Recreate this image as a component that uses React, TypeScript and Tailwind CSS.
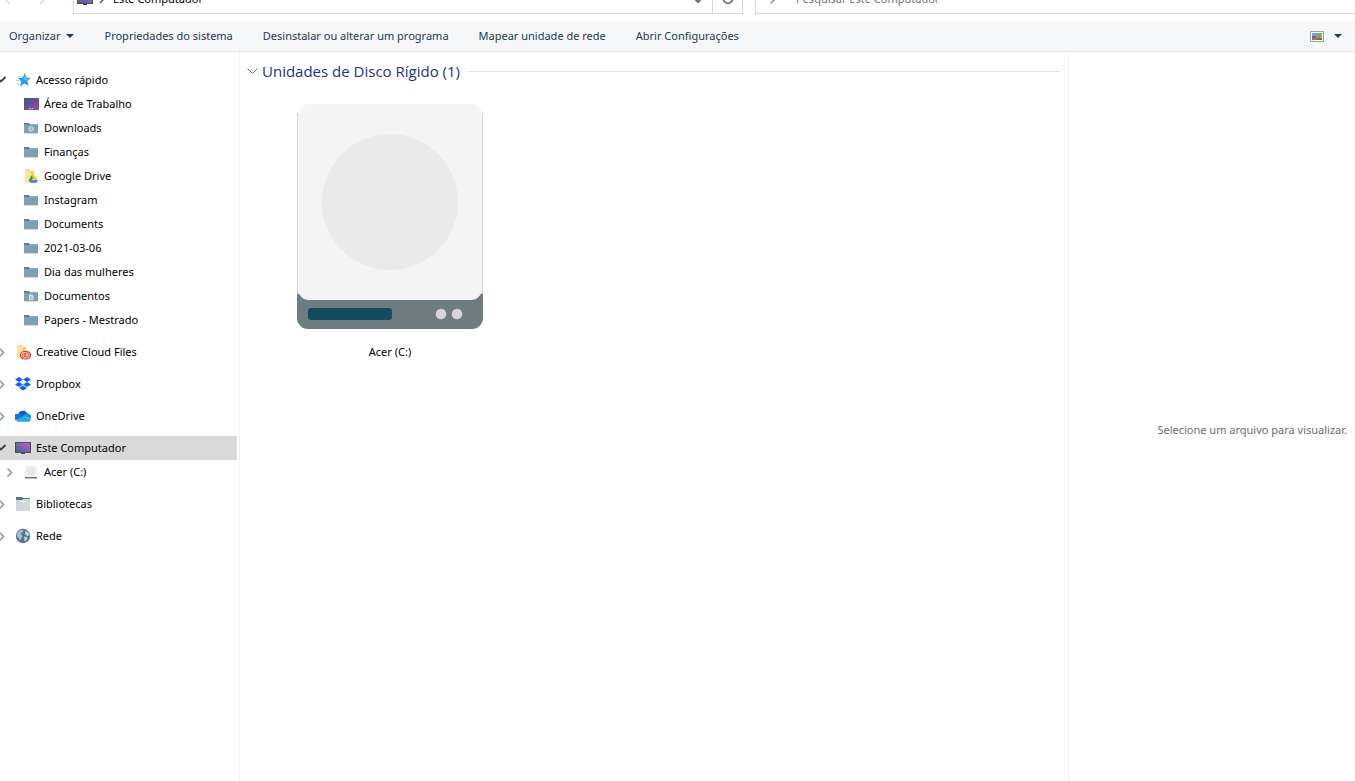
import type { ReactNode } from "react"

type IconName =
  | "star" | "desktop" | "downloads" | "folder" | "drive" | "documents"
  | "creative" | "dropbox" | "onedrive" | "computer" | "disk" | "library" | "network"

interface TreeItem {
  label: string
  icon: IconName
  expanded?: boolean
  selected?: boolean
  children?: TreeItem[]
}

const tree: TreeItem[] = [
  {
    label: "Acesso rápido",
    icon: "star",
    expanded: true,
    children: [
      { label: "Área de Trabalho", icon: "desktop" },
      { label: "Downloads", icon: "downloads" },
      { label: "Finanças", icon: "folder" },
      { label: "Google Drive", icon: "drive" },
      { label: "Instagram", icon: "folder" },
      { label: "Documents", icon: "folder" },
      { label: "2021-03-06", icon: "folder" },
      { label: "Dia das mulheres", icon: "folder" },
      { label: "Documentos", icon: "documents" },
      { label: "Papers - Mestrado", icon: "folder" },
    ],
  },
  { label: "Creative Cloud Files", icon: "creative", expanded: false },
  { label: "Dropbox", icon: "dropbox", expanded: false },
  { label: "OneDrive", icon: "onedrive", expanded: false },
  {
    label: "Este Computador",
    icon: "computer",
    expanded: true,
    selected: true,
    children: [{ label: "Acer (C:)", icon: "disk", expanded: false }],
  },
  { label: "Bibliotecas", icon: "library", expanded: false },
  { label: "Rede", icon: "network", expanded: false },
]

const commands = [
  "Propriedades do sistema",
  "Desinstalar ou alterar um programa",
  "Mapear unidade de rede",
  "Abrir Configurações",
]

const folderShape = (
  <>
    <path d="M1 3h5l1 1.5h8V6H1z" fill="#5f8094" />
    <path d="M1 5h6l1-.5h7V13H1z" fill="#7f9fb3" />
    <path d="M1 13h14v.5H1z" fill="#a9bfcc" />
  </>
)

const yellowFolder = (
  <>
    <path d="M2 1h5l1 2h3v11H2z" fill="#f3cf6e" />
    <path d="M2 1h3l3 3v11l-6-1z" fill="#fbe3a0" />
  </>
)

const icons: Record<IconName, ReactNode> = {
  star: (
    <>
      <path d="M10 1l1.4 4.5 4.3.4-3.3 3 1.2 4.9-4.2-2.2-4.4 3 1.2-5.2L3 6.1l4.6-.6z" fill="#2a9fe8" />
      <path d="M9.8 3.5l1 3 3 .2-2.3 2-3.3-1.5z" fill="#5cc4f5" />
      <path d="M2.500 4.5h3M1 8.5h3M2 12.5h2.500" stroke="#9fd6f5" />
    </>
  ),
  desktop: (
    <>
      <path d="M1 2h15v12H1z" fill="url(#wallpaper)" />
      <path d="M6 12.5h4" stroke="#c9c0e0" strokeDasharray="1.5 1" />
    </>
  ),
  downloads: (
    <>
      {folderShape}
      <circle cx="8" cy="9" r="2.7" fill="#c6d6e0" />
      <path d="M8 7v3M6.8 9L8 10.2 9.2 9" stroke="#7f9fb3" strokeWidth=".8" fill="none" />
    </>
  ),
  folder: folderShape,
  drive: (
    <>
      {yellowFolder}
      <path d="M8.6 7.2h2.8l3.6 5.6h-2.8z" fill="#f5c518" />
      <path d="M8.6 7.2l1.5 2.6-2.9 4.7-1.5-2.3z" fill="#27a25f" />
      <path d="M8.4 12.3H15l-1.5 2.4H7.1z" fill="#3b7ded" />
    </>
  ),
  documents: (
    <>
      {folderShape}
      <path d="M6 6.5h3L10.5 8v4H6z" fill="#d7e3ea" />
      <path d="M7 9h2.5M7 10.5h2.5" stroke="#7f9fb3" strokeWidth=".6" />
    </>
  ),
  creative: (
    <>
      {yellowFolder}
      <rect x="5.5" y="7.5" width="10" height="7.5" rx="3.7" fill="#fbd9d2" stroke="#e2372c" strokeWidth="1.2" />
      <circle cx="8.8" cy="11.5" r="1.7" fill="none" stroke="#e2372c" />
      <circle cx="12" cy="11" r="2.2" fill="none" stroke="#e2372c" />
    </>
  ),
  dropbox: (
    <path
      d="M4 1L0 3.5 4 6l4-2.5zM12 1L8 3.5 12 6l4-2.5zM0 8.5L4 11l4-2.5L4 6zM12 6L8 8.5 12 11l4-2.5zM4 12l4 2.5 4-2.5-4-2.5z"
      fill="#0d62fe"
    />
  ),
  onedrive: (
    <>
      <path d="M3 6.8A5 5 0 0 1 12.2 5.2L9.5 9 3 9z" fill="#0f5fb0" />
      <path d="M3.5 6.2c2.5-.4 4.7.8 6.7 2.5L.4 12.2A3.300 3.300 0 0 1 3.5 6.2z" fill="#1479cc" />
      <path d="M12.2 5.2a3.8 3.8 0 0 1 3.4 5.6L8.5 7.7c.9-1.5 2-2.4 3.7-2.5z" fill="#1a90df" />
      <path d="M1 12L9 8l6.7 2.9a2.6 2.6 0 0 1-2.4 2.9H3.2A3 3 0 0 1 1 12z" fill="#29a9ea" />
    </>
  ),
  computer: (
    <>
      <path d="M0 2h16v11H0z" fill="#4b4a57" />
      <path d="M1 3h14v9H1z" fill="url(#screen)" />
      <path d="M6 13h4v1H6z" fill="#4b4a57" />
    </>
  ),
  disk: (
    <>
      <path d="M2 2h12v11H2z" fill="#f1f1f1" />
      <circle cx="8" cy="7" r="4" fill="#e6e6e6" />
      <path d="M2 13h12v1.5H2z" fill="#607d8b" />
    </>
  ),
  library: (
    <>
      <path d="M1 1h6l1 1h7v3H1z" fill="#5c7785" />
      <path d="M1 4h6l1-1h7v12H1z" fill="#cfd8dd" />
      <path d="M6 5.5h4" stroke="#fff" />
    </>
  ),
  network: (
    <>
      <circle cx="8" cy="8" r="7.2" fill="#4f7890" />
      <path d="M2.5 4.5L6 1.8l2.5.7L7 5 5 5.8l2.5 2L6.5 10 5 12.5 3.5 10 1.8 8z" fill="#a9c0cc" />
      <path d="M10 3l3 1 1.5 3.5-2 .5-2.3-1.5zM9 8.5l3.5.7-1 3-2 1z" fill="#c3d2da" />
    </>
  ),
}

function Icon({ name }: { name: IconName }) {
  return (
    <svg viewBox="0 0 16 16" className="h-4 w-4 shrink-0" aria-hidden="true">
      {icons[name]}
    </svg>
  )
}

function TreeRow({ item, nested }: { item: TreeItem; nested?: boolean }) {
  return (
    <div className={`mr-0.5 flex h-6 items-center ${nested ? "pl-2" : ""} ${item.selected ? "bg-[#d9d9d9]" : ""}`}>
      {item.expanded !== undefined ? (
        <button type="button" aria-label={`Expandir ${item.label}`} className="h-4 w-[15px] shrink-0">
          <svg viewBox="0 0 15 16" className="h-4 w-[15px] overflow-visible" fill="none">
            {item.expanded ? (
              <path d="M-2 6.5L1 9.5l4.5-4.5" stroke="#404040" strokeWidth="1.8" />
            ) : (
              <path d="M-.5 4.5L3.5 8.5l-4 4" stroke="#a6a6a6" strokeWidth="1.8" />
            )}
          </svg>
        </button>
      ) : (
        <span className="w-[15px] shrink-0" />
      )}
      <a href="#" className="flex items-center gap-[5px] whitespace-nowrap">
        <Icon name={item.icon} />
        {item.label}
      </a>
    </div>
  )
}

function AddressBar() {
  return (
    <header className="flex h-[21px] items-end overflow-hidden pb-[7px]">
      <div className="flex h-[30px] w-[73px] shrink-0 items-center text-[#d9d9d9]">
        <button type="button" aria-label="Voltar" className="w-8">
          <svg viewBox="0 0 32 16" className="h-4 w-8" fill="none" stroke="currentColor" strokeWidth="1.5">
            <path d="M10 4L5.5 8.5 10 13" />
          </svg>
        </button>
        <button type="button" aria-label="Avançar" className="w-8">
          <svg viewBox="0 0 32 16" className="h-4 w-8" fill="none" stroke="currentColor" strokeWidth="1.5">
            <path d="M8 4l4.5 4.5L8 13" />
          </svg>
        </button>
      </div>
      <div className="flex h-[30px] flex-1 items-center border border-[#d9d9d9] pl-[3px]">
        <Icon name="computer" />
        <svg viewBox="0 0 20 16" className="h-4 w-5" fill="none" stroke="#606060" strokeWidth="1.5">
          <path d="M7 4l4 4-4 4" />
        </svg>
        <button type="button" className="flex-1 text-left">Este Computador</button>
        <button type="button" aria-label="Locais anteriores" className="flex w-7 justify-center">
          <svg viewBox="0 0 16 16" className="h-4 w-4" fill="none" stroke="#707070" strokeWidth="2">
            <path d="M4 7l4 4 4-4" />
          </svg>
        </button>
        <button type="button" aria-label="Atualizar" className="flex h-full w-[30px] items-center justify-center border-l border-[#d9d9d9]">
          <svg viewBox="0 0 16 16" className="h-4 w-4" fill="none" stroke="#707070" strokeWidth="1.8">
            <path d="M4.5 5a4.5 4.5 0 1 0 7 0" />
          </svg>
        </button>
      </div>
      <label className="ml-3 flex h-[30px] w-[600px] items-center border border-r-0 border-[#d9d9d9] pl-3">
        <svg viewBox="0 0 16 16" className="h-4 w-4" fill="none" stroke="#808080" strokeWidth="1.2">
          <circle cx="11" cy="4" r="4" />
          <path d="M8 7l-5.500 5.500" />
        </svg>
        <input
          type="search"
          aria-label="Pesquisar"
          placeholder="Pesquisar Este Computador"
          className="ml-3 flex-1 outline-none placeholder:text-[#757575]"
        />
      </label>
    </header>
  )
}

function Caret() {
  return (
    <svg viewBox="0 0 8 4" className="h-1 w-2" aria-hidden="true">
      <path d="M0 0h8L4 4z" fill="#1e395b" />
    </svg>
  )
}

function Toolbar() {
  return (
    <div className="flex h-[31px] items-center gap-[30px] whitespace-nowrap border-b border-[#e5e7ea] bg-[#f4f6f8] px-[9px] text-[#1e395b]">
      <button type="button" className="flex items-center gap-1.5">
        Organizar
        <Caret />
      </button>
      {commands.map((command) => (
        <button key={command} type="button">{command}</button>
      ))}
      <div className="ml-auto flex items-center gap-[10px] pr-1">
        <button type="button" aria-label="Alterar modo de exibição">
          <svg viewBox="0 0 14 11" className="h-[11px] w-[14px]">
            <path d="M.5.5h13v10H.5z" fill="#fff" stroke="#a0a0a0" />
            <path d="M2 2h10v7H2z" fill="#6aa5f0" />
            <path d="M2 5h4v2H2z" fill="#5a62b8" />
            <path d="M2 7h5v2H2z" fill="#e0562f" />
            <path d="M7 3h4v4H7z" fill="#b89a18" />
            <path d="M7 7h5v2H7z" fill="#3c9044" />
          </svg>
        </button>
        <button type="button" aria-label="Mais opções">
          <Caret />
        </button>
      </div>
    </div>
  )
}

function DiskDrawing() {
  return (
    <svg viewBox="0 0 186 225" className="h-[225px] w-[186px]" aria-hidden="true">
      <path d="M0 9h186v185H0z" fill="#d3d6d7" />
      <path d="M0 190h186v24a11 11 0 0 1-11 11H11a11 11 0 0 1-11-11z" fill="#6e7b80" />
      <path d="M12 0h162a11 11 0 0 1 11 11v174a11 11 0 0 1-11 11H12a11 11 0 0 1-11-11V11A11 11 0 0 1 12 0z" fill="#f4f4f4" />
      <circle cx="93" cy="98" r="68" fill="#eaeaea" />
      <rect x="11" y="204" width="84" height="12" rx="3" fill="#164a5f" />
      <circle cx="144" cy="210" r="5.3" fill="#d5d5d7" />
      <circle cx="160" cy="210" r="5.3" fill="#d5d5d7" />
    </svg>
  )
}

export default function App() {
  return (
    <div className="flex min-h-screen flex-col bg-white font-['Noto_Sans',sans-serif] text-[11px] leading-4 text-black">
      {/* Gradients shared by the monitor icons */}
      <svg className="absolute h-0 w-0" aria-hidden="true">
        <defs>
          <linearGradient id="screen" x1="0" y1="1" x2="1" y2="0">
            <stop offset="0" stopColor="#4a5ca8" />
            <stop offset="1" stopColor="#b06bb8" />
          </linearGradient>
          <linearGradient id="wallpaper" x1="0" y1="0" x2="1" y2="1">
            <stop offset="0" stopColor="#3d519f" />
            <stop offset="1" stopColor="#96508f" />
          </linearGradient>
        </defs>
      </svg>

      <AddressBar />
      <Toolbar />

      <div className="flex flex-1">
        <nav className="w-60 shrink-0 border-r border-[#f3f3f3] pt-4">
          <ul className="flex flex-col gap-2">
            {tree.map((item) => (
              <li key={item.label}>
                <TreeRow item={item} />
                {item.children?.map((child) => (
                  <TreeRow key={child.label} item={child} nested />
                ))}
              </li>
            ))}
          </ul>
        </nav>

        <main className="flex-1 px-2 pt-2">
          <div className="flex items-center">
            <button type="button" className="flex items-center gap-1 font-['Open_Sans',sans-serif] text-[15px] leading-[22px] text-[#1e3287]">
              <svg viewBox="0 0 11 7" className="-ml-px h-[7px] w-[11px]" fill="none" stroke="#707070">
                <path d="M.5.5l5 5 5-5" />
              </svg>
              <h2>Unidades de Disco Rígido (1)</h2>
            </button>
            <div className="ml-2 h-px flex-1 bg-[#e2e2e2]" />
          </div>
          <button type="button" className="ml-3.5 mt-[22px] flex w-64 flex-col items-center gap-[15px]">
            <DiskDrawing />
            Acer (C:)
          </button>
        </main>

        <aside className="flex w-[287px] shrink-0 items-center justify-end border-l border-[#f3f3f3] pr-2 pt-[26px] text-[#6d6d6d]">
          Selecione um arquivo para visualizar.
        </aside>
      </div>
    </div>
  )
}
